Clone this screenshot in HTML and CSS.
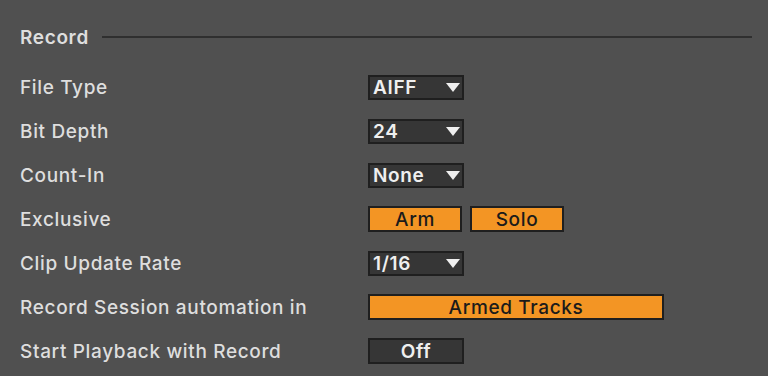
FILE: index.html
```html
<!DOCTYPE html>
<html>
<head>
<meta charset="utf-8">
<link rel="stylesheet" href="styles.css">
</head>
<body>
<div class="panel">
  <div class="section-head">
    <span class="section-title">Record</span>
    <span class="section-line"></span>
  </div>
  <div class="rows">
    <div class="row">
      <span class="label">File Type</span>
      <div class="control"><div class="dropdown"><span>AIFF</span><span class="tri"></span></div></div>
    </div>
    <div class="row">
      <span class="label">Bit Depth</span>
      <div class="control"><div class="dropdown"><span>24</span><span class="tri"></span></div></div>
    </div>
    <div class="row">
      <span class="label">Count-In</span>
      <div class="control"><div class="dropdown"><span>None</span><span class="tri"></span></div></div>
    </div>
    <div class="row">
      <span class="label">Exclusive</span>
      <div class="control">
        <div class="toggle on">Arm</div>
        <div class="toggle on">Solo</div>
      </div>
    </div>
    <div class="row">
      <span class="label">Clip Update Rate</span>
      <div class="control"><div class="dropdown"><span>1/16</span><span class="tri"></span></div></div>
    </div>
    <div class="row">
      <span class="label">Record Session automation in</span>
      <div class="control"><div class="toggle on wide">Armed Tracks</div></div>
    </div>
    <div class="row">
      <span class="label">Start Playback with Record</span>
      <div class="control"><div class="toggle off">Off</div></div>
    </div>
  </div>
</div>
</body>
</html>
```
FILE: styles.css
```css
html, body {
  margin: 0;
  padding: 0;
  background: #505050;
  width: 768px;
  height: 376px;
  overflow: hidden;
}
.panel {
  padding: 25px 16px 0 20px;
  font-family: Inter, "Noto Sans", sans-serif;
  color: #dedede;
  letter-spacing: 0.65px;
}
.section-head {
  display: flex;
  align-items: center;
  height: 24px;
  margin-bottom: 16px;
  gap: 13px;
}
.section-title {
  font-size: 19px;
  font-weight: 600;
}
.section-line {
  flex: 1;
  height: 2px;
  background: #2f2f2f;
}
.rows {
  display: flex;
  flex-direction: column;
}
.row {
  height: 44px;
  display: flex;
  align-items: center;
}
.label {
  width: 348px;
  font-size: 19px;
  font-weight: 500;
}
.control {
  display: flex;
  gap: 8px;
  align-items: center;
}
.dropdown {
  box-sizing: border-box;
  width: 96px;
  height: 25px;
  border: 2px solid #1f1f1f;
  background: #363636;
  display: flex;
  align-items: center;
  justify-content: space-between;
  padding: 0 2px 0 3px;
  font-size: 19px;
  font-weight: 600;
  color: #efefef;
}
.tri {
  width: 0;
  height: 0;
  border-left: 7px solid transparent;
  border-right: 7px solid transparent;
  border-top: 9px solid #efefef;
}
.toggle {
  box-sizing: border-box;
  width: 94px;
  height: 26px;
  border: 2px solid #1f1f1f;
  display: flex;
  align-items: center;
  justify-content: center;
  font-size: 19px;
  font-weight: 500;
}
.toggle.on {
  background: #f39524;
  color: #1b1b1b;
}
.toggle.wide {
  width: 296px;
}
.toggle.off {
  width: 96px;
  background: #363636;
  color: #efefef;
  font-weight: 600;
}
```
